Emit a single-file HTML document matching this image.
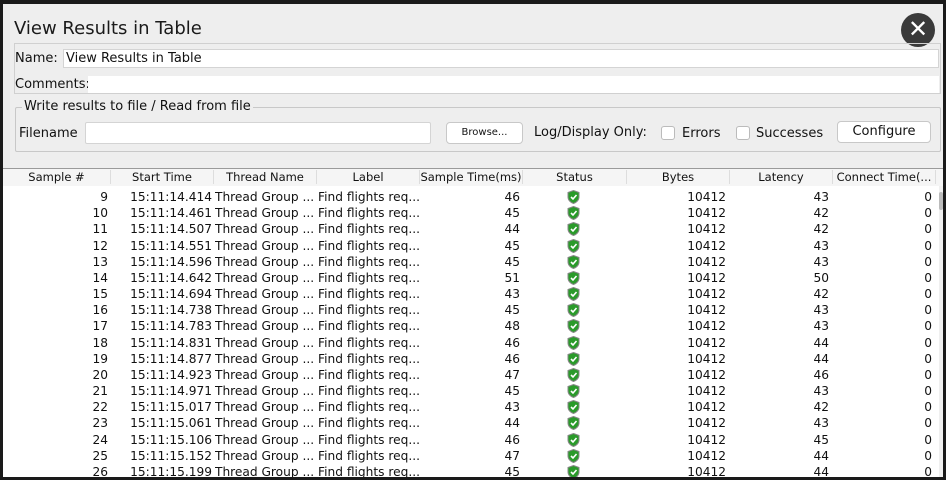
<!DOCTYPE html>
<html><head><meta charset="utf-8"><style>
*{box-sizing:border-box;margin:0;padding:0}
body{width:946px;height:480px;background:#1a1a1a;overflow:hidden;position:relative;font-family:"DejaVu Sans","Liberation Sans",sans-serif;color:#111}
#win{position:absolute;left:3px;top:4px;width:940px;height:473px;background:#eeeeee;overflow:hidden}
.abs{position:absolute}
.title{left:11px;top:14px;font-size:18px;color:#1a1a1a}
.close{left:898px;top:9px;width:34px;height:34px;border-radius:50%;background:#3a3a3a;color:#fff;text-align:center;line-height:33px;font-size:24px}
.field{background:#fff;border:1px solid #d4d4d4}
.lbl{font-size:13px}
.btn{background:#fff;border:1px solid #c8c8c8;border-radius:4px;text-align:center;font-size:13px}
.cb{width:14px;height:14px;background:#fff;border:1px solid #bbb;border-radius:3px}
.hdr{left:0;top:165px;width:940px;height:17px;background:#f5f5f5;font-size:11.5px}
.hdr div{position:absolute;top:1px;text-align:center;border-right:1px solid #ddd;height:14px;line-height:14px;white-space:nowrap;overflow:hidden}
.rows{left:0;top:182px;width:936px;height:291px;background:#fff;font-size:12.2px}
.r{position:relative;height:16.18px;line-height:16px;white-space:nowrap}
.r span{position:absolute;overflow:hidden}
.sh{display:inline-block;width:13px;height:14px;position:absolute;top:1px}
</style></head><body>
<div id="win">
<div class="abs title">View Results in Table</div>
<div class="abs close">✕</div>
<div class="abs" style="left:11px;top:39px;width:927px;height:51px;border:1px solid #d0d0d0"></div>
<div class="abs lbl" style="left:12px;top:47px">Name:</div>
<div class="abs field" style="left:60px;top:45px;width:876px;height:19px"></div>
<div class="abs lbl" style="left:63px;top:47px">View Results in Table</div>
<div class="abs lbl" style="left:12px;top:73px">Comments:</div>
<div class="abs" style="left:85px;top:72px;width:851px;height:17px;background:#fff"></div>
<div class="abs" style="left:12px;top:103px;width:926px;height:45px;border:1px solid #c8c8c8;border-radius:2px"></div>
<div class="abs lbl" style="left:19px;top:95px;background:#eeeeee;padding:0 2px">Write results to file / Read from file</div>
<div class="abs lbl" style="left:16px;top:122px">Filename</div>
<div class="abs field" style="left:82px;top:118px;width:346px;height:22px;border-radius:2px"></div>
<div class="abs btn" style="left:443px;top:118px;width:77px;height:22px;line-height:20px;font-size:10px">Browse...</div>
<div class="abs lbl" style="left:531px;top:121px">Log/Display Only:</div>
<div class="abs cb" style="left:658px;top:122px"></div>
<div class="abs lbl" style="left:679px;top:122px">Errors</div>
<div class="abs cb" style="left:733px;top:122px"></div>
<div class="abs lbl" style="left:753px;top:122px">Successes</div>
<div class="abs btn" style="left:834px;top:117px;width:94px;height:22px;line-height:20px">Configure</div>
<div class="abs" style="left:0;top:164px;width:940px;height:1px;background:#9a9a9a"></div>
<div class="abs hdr">
<div style="left:0;width:108px">Sample #</div>
<div style="left:108px;width:103px">Start Time</div>
<div style="left:211px;width:103px">Thread Name</div>
<div style="left:314px;width:103px">Label</div>
<div style="left:417px;width:103px">Sample Time(ms)</div>
<div style="left:520px;width:104px">Status</div>
<div style="left:624px;width:103px">Bytes</div>
<div style="left:727px;width:103px">Latency</div>
<div style="left:830px;width:103px">Connect Time(...</div>
</div>
<div class="abs rows" id="rows"></div>
<div class="abs" style="left:936px;top:182px;width:4px;height:291px;background:#f0f0f0"></div>
<div class="abs" style="left:936px;top:188px;width:4px;height:18px;background:#bbb;border-radius:2px"></div>
</div>
<script>
var d=[[9,"14.414",46,43],[10,"14.461",45,42],[11,"14.507",44,42],[12,"14.551",45,43],[13,"14.596",45,43],[14,"14.642",51,50],[15,"14.694",43,42],[16,"14.738",45,43],[17,"14.783",48,43],[18,"14.831",46,44],[19,"14.877",46,44],[20,"14.923",47,46],[21,"14.971",45,43],[22,"15.017",43,42],[23,"15.061",44,43],[24,"15.106",46,45],[25,"15.152",47,44],[26,"15.199",45,44]];
var h="",sh='<svg class="sh" style="left:564px" viewBox="0 0 13 14"><path d="M6.5 0.5 L12 2.5 V7 C12 10 9.5 12.5 6.5 13.5 C3.5 12.5 1 10 1 7 V2.5 Z" fill="#2a9a2a" stroke="#888" stroke-width="1"/><path d="M4 7 L6 9 L9.5 5" fill="none" stroke="#fff" stroke-width="1.6"/></svg>';
d.forEach(function(r){h+='<div class="r"><span style="left:0;width:105px;text-align:right">'+r[0]+'</span><span style="left:111px;width:98px;text-align:right">15:11:'+r[1]+'</span><span style="left:212px;width:102px">Thread Group ...</span><span style="left:315px;width:102px">Find flights req...</span><span style="left:417px;width:100px;text-align:right">'+r[2]+'</span>'+sh+'<span style="left:624px;width:99px;text-align:right">10412</span><span style="left:727px;width:99px;text-align:right">'+r[3]+'</span><span style="left:830px;width:99px;text-align:right">0</span></div>'});
document.getElementById('rows').innerHTML='<div style="height:3px"></div>'+h;
</script>
</body></html>
